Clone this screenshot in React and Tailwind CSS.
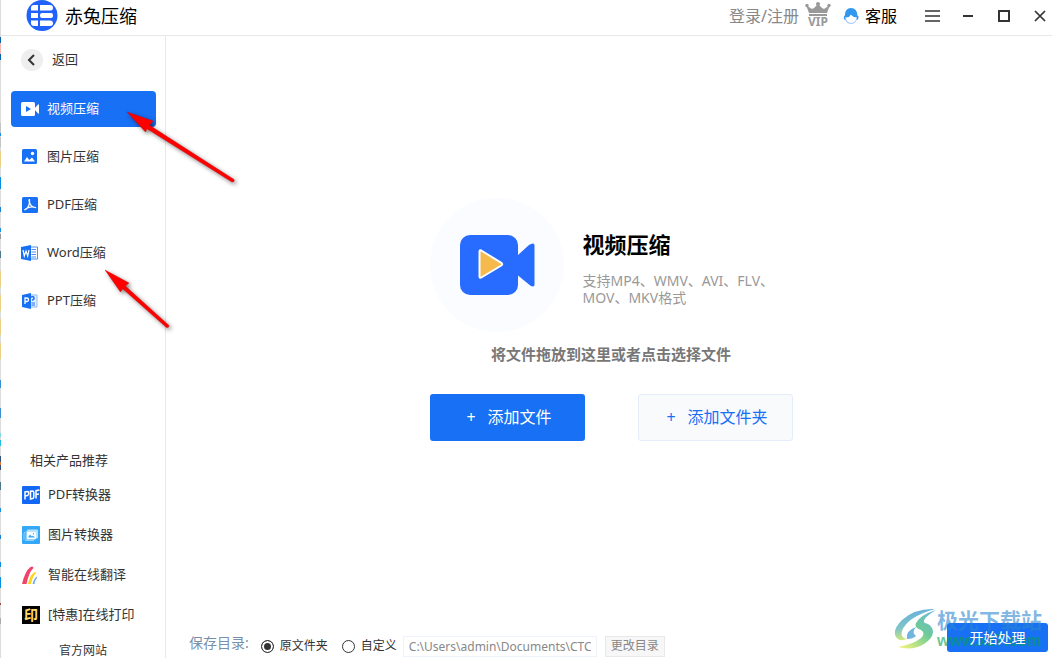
// 压缩工具主界面
// 左边是功能菜单，右边是添加文件的区域，底部是保存目录设置

import { useState } from "react";

// 窗口左边露出来的桌面内容，[起点, 高度, 颜色]
const edgeMarks = [
  [37, 6, "#0a64ad"], [43, 11, "#f0b8b8"], [54, 6, "#0a64ad"], [123, 10, "#c4c4c4"],
  [133, 3, "#1c90dc"], [137, 10, "#c4c4c4"], [151, 16, "#ebd086"], [177, 12, "#0a8fe0"],
  [207, 5, "#1c80cc"], [228, 4, "#1c90dc"], [234, 5, "#999999"], [251, 7, "#4c7a88"],
  [271, 16, "#ebd086"], [295, 16, "#ebd086"], [319, 16, "#ebd086"], [343, 16, "#ebd086"],
  [380, 8, "#3a90d0"], [408, 10, "#3a90d0"], [433, 4, "#80d8e0"], [440, 6, "#20bfe0"],
  [456, 6, "#35507a"], [462, 3, "#e07030"], [465, 5, "#35507a"], [482, 8, "#4c7a88"],
  [508, 4, "#1c90dc"], [535, 4, "#1c80cc"], [562, 5, "#0a8fe0"], [577, 11, "#0a8fe0"],
  [603, 2, "#a05050"], [618, 6, "#aaaaaa"],
];

// 软件 logo
function Logo() {
  return (
    <svg className="h-8 w-8 shrink-0" viewBox="0 0 32 32">
      <circle cx="16" cy="15.5" r="15.5" fill="#2062fb" />
      <g fill="#fff">
        <path d="M8 5h4v5.500H5V8q0-3 3-3z" />
        <path d="M14 5h10q3 0 3 3t-3 2.500H14z" />
        <path d="M5 13h7v5H5z" />
        <rect x="14" y="13" width="13" height="5" rx="2" />
        <path d="M5 20.500h7V26H8q-3 0-3-3z" />
        <path d="M14 20.500h10q3 0 3 2.700T24 26H14z" />
      </g>
    </svg>
  );
}

function VideoIcon() {
  return (
    <svg className="h-[18px] w-[18px]" viewBox="0 0 18 18">
      <rect x="0" y="2" width="14" height="14" rx="1.500" fill="#fff" />
      <path d="M13 9l4-4.500q1-.5 1 .5v8q0 1-1 .5z" fill="#fff" />
      <path d="M5 6l5 3-5 3z" fill="#1870f4" />
    </svg>
  );
}

function PictureIcon() {
  return (
    <svg className="h-[18px] w-[18px]" viewBox="0 0 18 18">
      <rect x="1" y="1" width="15" height="15" rx="1.500" fill="#1870f4" />
      <path d="M3 13.500L6 9l2.200 3L11 9.500l3 4z" fill="#fff" />
      <circle cx="11.500" cy="5.500" r="1.700" fill="#fff" />
    </svg>
  );
}

function PdfIcon() {
  return (
    <svg className="h-[18px] w-[18px]" viewBox="0 0 18 18">
      <rect x="1" y="1" width="16" height="16" rx="1.500" fill="#1870f4" />
      <path
        d="M8.500 3.500q-1 0 0 3 .7 2.500 2.500 3.700t4 1.500q-4-1.300-7-.3t-4.500 2.600q3-1 4.300-4.500T8.500 3.500z"
        fill="none"
        stroke="#fff"
        strokeWidth="1.200"
      />
    </svg>
  );
}

function WordIcon() {
  return (
    <svg className="h-[18px] w-[18px]" viewBox="0 0 18 18">
      <path d="M10 3h6.500v12H10" fill="#fff" stroke="#4a8ff7" />
      <path d="M10.500 5.500H15M10.500 8H15M10.500 10.500H15M10.500 13H15" stroke="#4a8ff7" />
      <path d="M0 3l10-2v16L0 15z" fill="#1870f4" />
      <path d="M2 6l1.300 6L5 7l1.700 5L8 6" fill="none" stroke="#fff" strokeWidth="1.200" />
    </svg>
  );
}

function PptIcon() {
  return (
    <svg className="h-[18px] w-[18px]" viewBox="0 0 18 18">
      <path d="M10 3h6v12h-6" fill="#e5f0ff" stroke="#8db9fa" />
      <path d="M10.500 11H14M10.500 13H14" stroke="#1870f4" />
      <path d="M10 5q3-1 3 1t-2 2" fill="none" stroke="#1870f4" strokeWidth="1.500" />
      <path d="M1 3l9-2v16l-9-2z" fill="#1870f4" />
      <path d="M4 12V6h1.500q2 0 2 1.800t-2 1.700H4" fill="none" stroke="#fff" strokeWidth="1.300" />
    </svg>
  );
}

function PdfConvertIcon() {
  return (
    <svg className="h-[18px] w-[18px]" viewBox="0 0 18 18">
      <rect width="18" height="18" rx="1" fill="#1268f5" />
      <g fill="none" stroke="#fff" strokeWidth="1.500">
        <path d="M3 13.500V6l2.500-.4q1.300 0 1.300 1.700T5.500 9.500L3 10" />
        <path d="M8.500 13V5.200l2-.3q1.300 0 1.300 1.500v4.300q0 1.600-1.300 1.900z" />
        <path d="M14 12.500V4.700l3.500-.6M14 8.500l3-.5" />
      </g>
    </svg>
  );
}

function PictureConvertIcon() {
  return (
    <svg className="h-[18px] w-[18px]" viewBox="0 0 18 18">
      <rect width="18" height="18" rx="1" fill="#35a7f7" />
      <path d="M2 14V7l1-1M3 14.500h9" stroke="#8fd0fb" fill="none" />
      <rect x="3.500" y="5" width="10" height="9" rx="1" fill="#8fd0fb" />
      <rect x="5" y="3.500" width="11" height="9" rx="1" fill="#b9e2fd" />
      <rect x="5" y="6" width="9" height="7" rx="1" fill="#fff" />
      <path d="M6 11.500l2-3 2 2 1-1 2 2z" fill="#35a7f7" />
      <circle cx="11.500" cy="7.700" r=".7" fill="#35a7f7" />
    </svg>
  );
}

function TranslateIcon() {
  return (
    <svg className="h-[18px] w-[18px]" viewBox="0 0 18 18">
      <path d="M0 18Q3 5 8.500 1q2.500-1.500 3 1Q7 6 4.500 18z" fill="#f0436b" />
      <path d="M6 18Q8 9 12 6.500q2-1 2 1Q10.500 10 9 18z" fill="#ffd51c" />
      <path d="M10.500 18q1.500-6 4.500-7.500v1.500q-2 2-2.500 6z" fill="#72a8e4" />
    </svg>
  );
}

function PrintIcon() {
  return (
    <span className="flex h-[18px] w-[18px] items-center justify-center bg-black text-sm leading-none font-bold text-[#ffdc69]">
      印
    </span>
  );
}

// 右上角灰色的 VIP 皇冠
function VipIcon() {
  return (
    <span className="flex w-[26px] flex-col items-center text-[#999]">
      <svg className="h-[15px] w-[26px]" viewBox="0 0 26 15" fill="#999">
        <path d="M1 3l6 4 2-1 4-4 4 4 2 1 6-4-3 8H4z" />
        <path d="M4 12h18v2H4z" />
        <circle cx="13" cy="2" r="2" />
        <circle cx="2" cy="3.500" r="1.700" />
        <circle cx="24" cy="3.500" r="1.700" />
      </svg>
      <span className="text-xs leading-[10px] font-bold">VIP</span>
    </span>
  );
}

function ServiceIcon() {
  return (
    <svg className="h-4 w-4" viewBox="0 0 16 16">
      <path d="M8 0q6 0 6.500 7.500Q16 8 15.500 10t-2 2H2.500Q1 12 .8 10t1-2.500Q2 0 8 0z" fill="#3298ef" />
      <path d="M2 9h12q0 7-6 7T2 9z" fill="#a9c6fa" />
      <path d="M3 10Q6.500 9.500 8 6.500q2 3 5.500 3-.5 5-5.500 5.500-4.500-.5-5-5z" fill="#fff" />
    </svg>
  );
}

// 中间大的摄像机图
function CameraPicture() {
  return (
    <svg className="h-[134px] w-[134px] shrink-0" viewBox="0 0 134 134">
      <circle cx="67" cy="67" r="67" fill="#fafcff" />
      <rect x="30" y="37" width="58" height="60" rx="10" fill="#276bff" />
      <path d="M88 57l11-10q2-1.500 4-1.500 1.500 0 1.500 2v39q0 2-1.500 2-2 0-4-2L88 77.500z" fill="#276bff" />
      <path
        d="M49.500 53.500v25q0 2 1.800 1l20-12q1.800-1.300 0-2.600l-20-12.400q-1.800-.9-1.800 1z"
        fill="#f5b94c"
        stroke="#fff"
        strokeWidth="2"
      />
    </svg>
  );
}

// 红色的指示箭头，盖在页面上面
function RedArrows() {
  return (
    <svg className="pointer-events-none absolute top-0 left-0 h-[340px] w-[250px]" viewBox="0 0 250 340">
      <g className="drop-shadow-[2px_2px_2px_rgba(0,0,0,0.5)]" fill="#f00" stroke="#d00000" strokeWidth=".4">
        <path d="M127 112L153 121 149.500 125.300 234 179.500Q235 182 232 182L147 128.700 145.500 132z" />
        <path d="M105 270L129 283 125.300 286 169 325.500Q169 328 166.500 327.500L122.700 288.700 120.500 292z" />
      </g>
    </svg>
  );
}

// 右下角的水印
function Watermark() {
  return (
    <div className="pointer-events-none absolute right-2.5 bottom-2 flex items-center">
      <svg className="h-[42px] w-11" viewBox="0 0 44 42">
        <defs>
          <linearGradient id="wave" x1="0" y1="0" x2=".3" y2="1">
            <stop offset="0" stopColor="#5fa9e2" />
            <stop offset=".6" stopColor="#7fc4c8" />
            <stop offset="1" stopColor="#d8ec70" />
          </linearGradient>
          <linearGradient id="tail" x1="1" y1="0" x2=".2" y2="1">
            <stop offset="0" stopColor="#6fb4e4" />
            <stop offset=".5" stopColor="#6ccb98" />
            <stop offset="1" stopColor="#e6f07c" />
          </linearGradient>
        </defs>
        <path d="M42 1Q22 0 9 12-1 22 3 29q3 5 11 2-7-1-5-8Q14 9 42 1z" fill="url(#wave)" />
        <path d="M43 2Q27 7 23 15q-2 5 5 7 5 3 0 8-7 6-23 9 15 4 26-3 12-8 8-16-2-4-7-5-5-3 11-13z" fill="url(#tail)" />
        <path d="M14 31q-2-8 9-12-5 6 0 9-3 3-9 3z" fill="#70b4e0" />
      </svg>
      <div>
        <p className="text-[21px] leading-6 font-bold text-[#2c86cf]/60">极光下载站</p>
        <p className="font-['Liberation_Sans',sans-serif] text-base leading-[18px] font-bold text-[#00a050]/60">
          www.xz7.com
        </p>
      </div>
    </div>
  );
}

const menus = [
  { name: "视频压缩", icon: VideoIcon },
  { name: "图片压缩", icon: PictureIcon },
  { name: "PDF压缩", icon: PdfIcon },
  { name: "Word压缩", icon: WordIcon },
  { name: "PPT压缩", icon: PptIcon },
];

const products = [
  { name: "PDF转换器", icon: PdfConvertIcon },
  { name: "图片转换器", icon: PictureConvertIcon },
  { name: "智能在线翻译", icon: TranslateIcon },
  { name: "[特惠]在线打印", icon: PrintIcon },
];

export default function App() {
  const [active, setActive] = useState("视频压缩"); // 当前选中的功能
  const [saveTo, setSaveTo] = useState("source");   // 保存到原文件夹还是自定义目录
  const [path, setPath] = useState("C:\\Users\\admin\\Documents\\CTCompress");

  const radioClass =
    "h-[13px] w-[13px] appearance-none rounded-full border border-[#333] bg-white checked:bg-[#333] checked:shadow-[inset_0_0_0_2px_#fff]";

  return (
    <div className="relative flex h-screen overflow-hidden bg-white font-['Noto_Sans','Noto_Sans_CJK_SC',sans-serif] text-[13px] text-[#333]">
      {/* 左边缘 */}
      <svg className="h-full w-px shrink-0 bg-[#dcdcdc]">
        {edgeMarks.map(([y, height, color]) => (
          <rect key={y} y={y} width="1" height={height} fill={color} />
        ))}
      </svg>

      <div className="flex min-w-0 flex-1 flex-col">
        {/* 标题栏 */}
        <header className="flex h-9 shrink-0 items-start justify-between border-b border-[#e8e8e8] pl-[25px]">
          <div className="flex items-center gap-[7px]">
            <Logo />
            <h1 className="text-lg leading-6 text-black">赤兔压缩</h1>
          </div>
          <div className="flex h-8 items-center pr-1.5">
            <button className="text-base leading-6 text-[#888]">登录/注册</button>
            <button aria-label="VIP" className="ml-1.5 pb-1">
              <VipIcon />
            </button>
            <button className="ml-3 flex items-center gap-1.5 text-base leading-6 text-black">
              <ServiceIcon />
              客服
            </button>
            {/* 窗口控制按钮 */}
            <button aria-label="菜单" className="ml-7">
              <svg className="h-3 w-[15px]" viewBox="0 0 15 12" stroke="#333" strokeWidth="1.500">
                <path d="M0 1h15M0 6h15M0 11h15" />
              </svg>
            </button>
            <div className="ml-[22px] flex items-center gap-6">
              <button aria-label="最小化">
                <svg className="h-3 w-3" viewBox="0 0 12 12" stroke="#333" strokeWidth="2">
                  <path d="M1 6h10" />
                </svg>
              </button>
              <button aria-label="最大化">
                <svg className="h-3 w-3" viewBox="0 0 12 12" stroke="#333" strokeWidth="2" fill="none">
                  <path d="M1 1h10v10H1z" />
                </svg>
              </button>
              <button aria-label="关闭">
                <svg className="h-3 w-3" viewBox="0 0 12 12" stroke="#333" strokeWidth="1.700">
                  <path d="M1 1l10 10M11 1L1 11" />
                </svg>
              </button>
            </div>
          </div>
        </header>

        <div className="flex min-h-0 flex-1">
          {/* 左侧菜单 */}
          <aside className="flex w-[165px] shrink-0 flex-col border-r border-[#e8e8e8] pt-[13px]">
            <button className="ml-5 flex items-center gap-[9px] self-start">
              <span className="flex h-[22px] w-[22px] items-center justify-center rounded-full bg-[#eee]">
                <svg className="h-3 w-3" viewBox="0 0 12 12" fill="none" stroke="#333" strokeWidth="2">
                  <path d="M8 1L3 6l5 5" />
                </svg>
              </span>
              返回
            </button>

            <nav className="mt-5 flex flex-col gap-3 px-2.5">
              {menus.map(({ name, icon: Icon }) => (
                <button
                  key={name}
                  onClick={() => setActive(name)}
                  className={
                    "flex h-9 w-[145px] items-center gap-2 rounded px-2.5 " +
                    (active === name ? "bg-[#1870f4] text-white" : "")
                  }
                >
                  <Icon />
                  {name}
                </button>
              ))}
            </nav>

            {/* 相关产品 */}
            <div className="mt-auto">
              <h2 className="pl-[29px] leading-5">相关产品推荐</h2>
              <ul className="pt-[5px]">
                {products.map(({ name, icon: Icon }) => (
                  <li key={name}>
                    <a href="#" className="flex h-10 items-center gap-2 pl-[21px]">
                      <Icon />
                      {name}
                    </a>
                  </li>
                ))}
              </ul>
              <a href="#" className="flex h-[23px] items-center justify-center pt-2 text-xs">
                官方网站
              </a>
            </div>
          </aside>

          <main className="flex min-w-0 flex-1 flex-col">
            {/* 拖放文件区域 */}
            <section className="flex flex-1 flex-col items-center justify-center pb-5 pl-1">
              <div className="flex w-[363px] items-center gap-[19px]">
                <CameraPicture />
                <div className="pt-1">
                  <h2 className="text-[22px] leading-8 font-bold text-black">视频压缩</h2>
                  <p className="mt-3 text-sm leading-[17px] whitespace-nowrap text-[#999]">
                    支持MP4、WMV、AVI、FLV、
                    <br />
                    MOV、MKV格式
                  </p>
                </div>
              </div>
              <p className="mt-2.5 text-[15px] leading-6 font-bold text-[#777]">将文件拖放到这里或者点击选择文件</p>
              <div className="mt-7 flex gap-[53px]">
                <button className="flex h-[47px] w-[155px] items-center justify-center gap-3 rounded-[3px] bg-[#1870f4] pl-1 text-base text-white">
                  <span>+</span>添加文件
                </button>
                <button className="flex h-[47px] w-[155px] items-center justify-center gap-3 rounded-[3px] border border-[#e4edfa] bg-[#f9fafc] pl-1 text-base text-[#1870f4]">
                  <span>+</span>添加文件夹
                </button>
              </div>
            </section>

            {/* 底部保存目录 */}
            <footer className="flex h-9 shrink-0 items-end justify-between pr-1 pl-[23px]">
              <div className="flex items-center pb-px">
                <span className="pb-1.5 text-sm leading-4 text-[#7890ac]">保存目录:</span>
                <label className="ml-3 flex items-center gap-1.5 text-xs">
                  <input
                    type="radio"
                    name="saveTo"
                    className={radioClass}
                    checked={saveTo === "source"}
                    onChange={() => setSaveTo("source")}
                  />
                  原文件夹
                </label>
                <label className="ml-3.5 flex items-center gap-1.5 text-xs">
                  <input
                    type="radio"
                    name="saveTo"
                    className={radioClass}
                    checked={saveTo === "custom"}
                    onChange={() => setSaveTo("custom")}
                  />
                  自定义
                </label>
                <input
                  type="text"
                  aria-label="保存目录"
                  className="ml-1.5 h-[21px] w-[194px] border border-[#eef3fb] px-[5px] text-xs text-[#888]"
                  value={path}
                  onChange={(e) => setPath(e.target.value)}
                />
                <button className="ml-2 h-[21px] w-[60px] border border-[#e8e8e8] bg-[#f7f7f7] text-xs text-[#888]">
                  更改目录
                </button>
              </div>
              <button className="mb-1.5 h-[29px] w-[101px] rounded-[3px] bg-[#1870f4] text-sm text-white">
                {/* 文字要在水印上面 */}
                <span className="relative z-10">开始处理</span>
              </button>
            </footer>
          </main>
        </div>
      </div>

      <Watermark />
      <RedArrows />
    </div>
  );
}
